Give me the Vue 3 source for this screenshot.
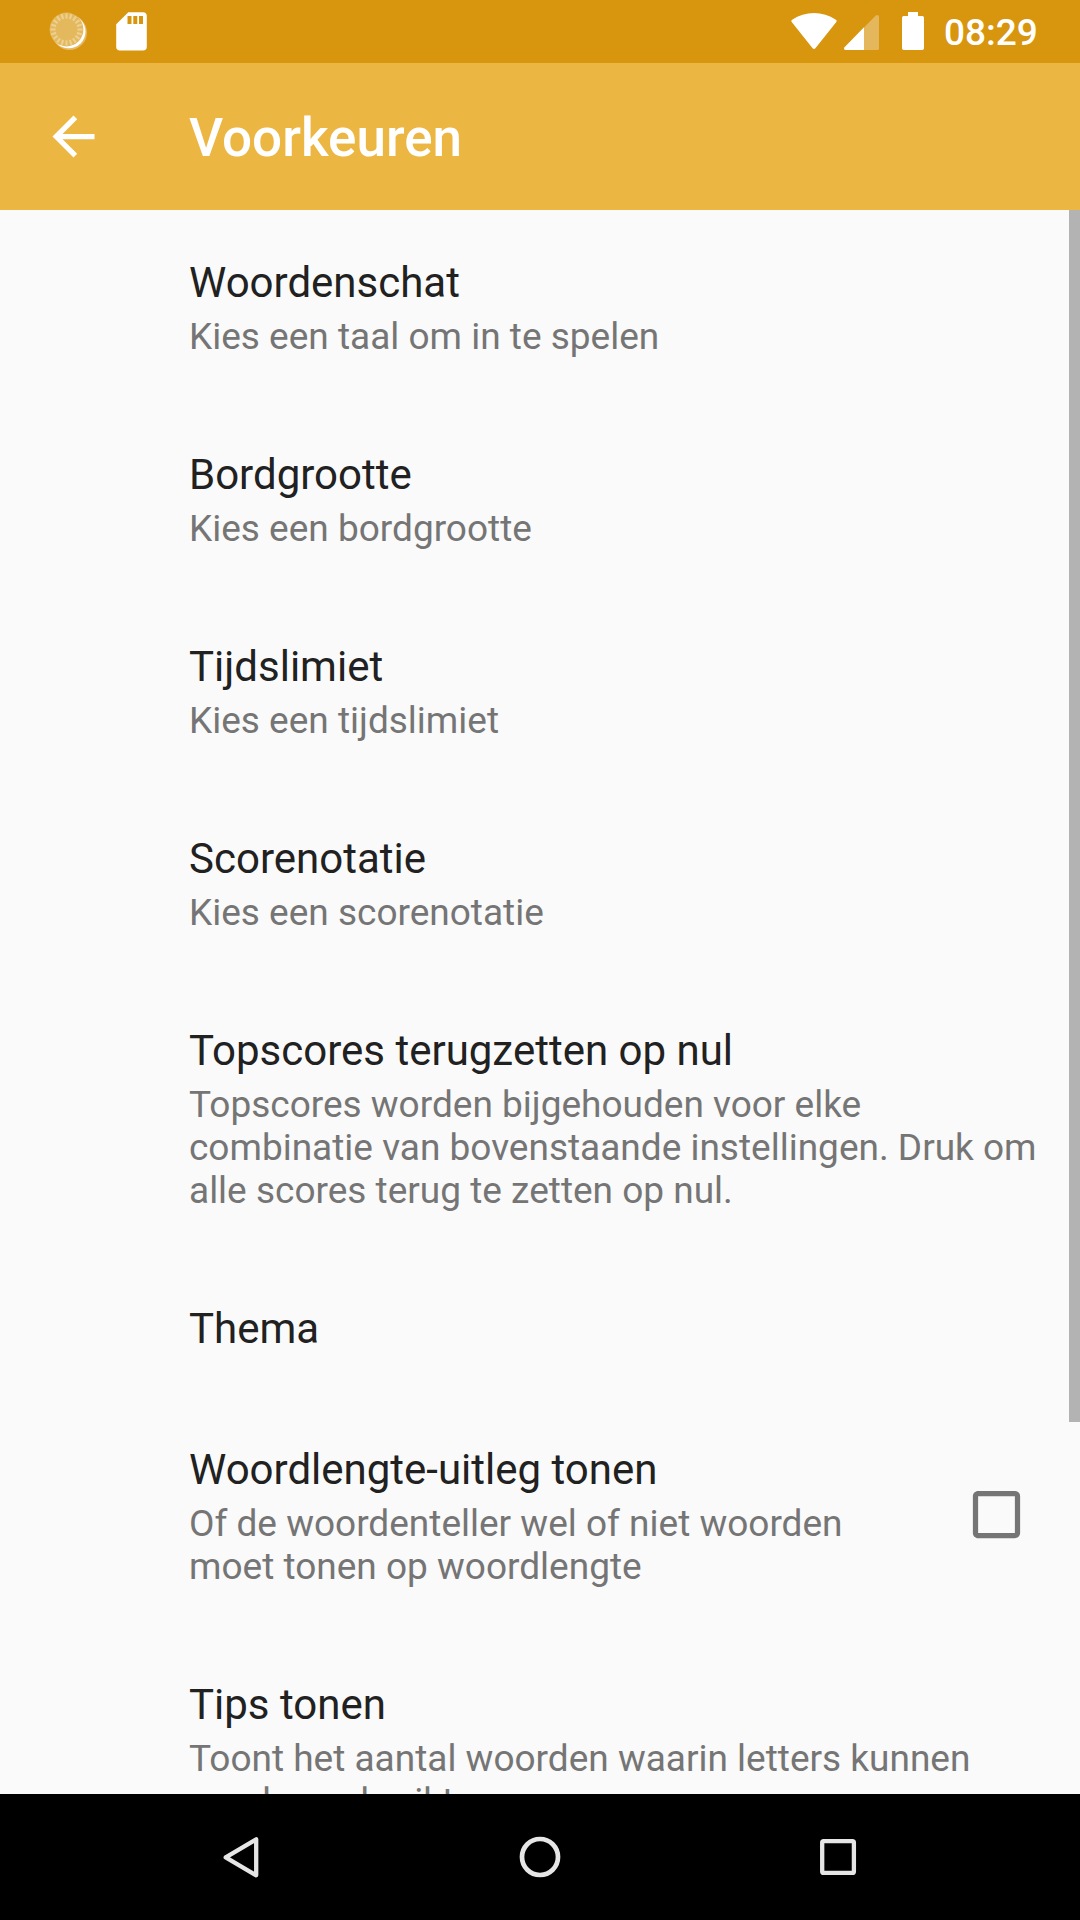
<script setup>
const items = [
  { title: 'Woordenschat', summary: 'Kies een taal om in te spelen' },
  { title: 'Bordgrootte', summary: 'Kies een bordgrootte' },
  { title: 'Tijdslimiet', summary: 'Kies een tijdslimiet' },
  { title: 'Scorenotatie', summary: 'Kies een scorenotatie' },
  {
    title: 'Topscores terugzetten op nul',
    summary:
      'Topscores worden bijgehouden voor elke combinatie van bovenstaande instellingen. Druk om alle scores terug te zetten op nul.',
  },
  { title: 'Thema' },
  {
    title: 'Woordlengte-uitleg tonen',
    summary: 'Of de woordenteller wel of niet woorden moet tonen op woordlengte',
    checkbox: true,
  },
  {
    title: 'Tips tonen',
    summary: 'Toont het aantal woorden waarin letters kunnen worden gebruikt',
  },
]

const rays = Array.from({ length: 20 }, (_, i) => i * 18)
</script>

<template>
  <div class="screen">
    <header class="status">
      <svg class="status-icons" width="160" height="63" viewBox="0 0 160 63">
        <circle cx="69.500" cy="32.500" r="17.500" fill="#fff" fill-opacity=".35" />
        <circle cx="68.700" cy="31.500" r="16.800" fill="#fff" />
        <circle cx="66.500" cy="29.500" r="16.900" fill="#e4b85c" />
        <g stroke="#edcf90" stroke-width="2.200">
          <line
            v-for="a in rays"
            :key="a"
            x1="66.500"
            y1="13.400"
            x2="66.500"
            y2="18.600"
            :transform="`rotate(${a} 66.500 29.500)`"
          />
        </g>
        <path
          fill="#fff"
          fill-rule="evenodd"
          d="M128.300 12.300H143a3.800 3.800 0 0 1 3.800 3.800V46.700a3.800 3.800 0 0 1-3.800 3.800H120a3.800 3.800 0 0 1-3.800-3.800V24.300ZM127.500 16v8h4v-8ZM133.300 16v8h4v-8ZM139 16v8h4v-8Z"
        />
      </svg>
      <div class="status-right">
        <svg width="136" height="63" viewBox="790 0 136 63" fill="#fff">
          <path d="M791.900 22C791.300 21.200 791.500 20.300 792.300 19.800C799 15.200 806.500 13 814.200 13S829.400 15.200 836.100 19.800C836.900 20.300 837.100 21.200 836.500 22L815.600 48.300C814.800 49.300 813.600 49.300 812.800 48.300Z" transform="translate(-.2 0)" />
          <path fill-opacity=".32" d="M864 27.500L875.800 15.600C877 14.400 879 15 879 17V48.500A1.500 1.500 0 0 1 877.500 50H864Z" />
          <path d="M864 27.300V50H845.500C844 50 843.500 48.500 844.500 47.300Z" />
          <path d="M908 12h10v4h4.300a1.700 1.700 0 0 1 1.700 1.700V48.300a1.700 1.700 0 0 1-1.700 1.700H903.700a1.700 1.700 0 0 1-1.700-1.700V17.700a1.700 1.700 0 0 1 1.700-1.700H908Z" />
        </svg>
        <span class="clock">08:29</span>
      </div>
    </header>

    <div class="toolbar">
      <svg class="back" width="63" height="63" viewBox="0 0 24 24">
        <path fill="#fff" d="M20 11H7.830l5.590-5.590L12 4l-8 8 8 8 1.410-1.410L7.830 13H20v-2z" />
      </svg>
      <h1>Voorkeuren</h1>
    </div>

    <main class="list">
      <section v-for="item in items" :key="item.title" class="item">
        <div class="texts">
          <div class="title">{{ item.title }}</div>
          <div v-if="item.summary" class="summary">{{ item.summary }}</div>
        </div>
        <svg v-if="item.checkbox" class="check" width="63" height="63" viewBox="0 0 24 24">
          <path
            fill="#757575"
            d="M19 5v14H5V5h14m0-2H5c-1.100 0-2 .9-2 2v14c0 1.100.9 2 2 2h14c1.100 0 2-.9 2-2V5c0-1.100-.9-2-2-2z"
          />
        </svg>
      </section>
      <div class="scrollbar"></div>
    </main>

    <nav class="nav">
      <svg width="298" height="126" viewBox="93 0 298 126" fill="none" stroke="#e6e6e6" stroke-width="4.300">
        <path stroke-linejoin="round" d="M256.200 45V81L225.700 63Z" transform="translate(0 .3)" />
      </svg>
      <svg width="298" height="126" viewBox="391 0 298 126" fill="none" stroke="#e6e6e6" stroke-width="4.700">
        <circle cx="540" cy="63" r="18" />
      </svg>
      <svg width="298" height="126" viewBox="689 0 298 126" fill="none" stroke="#e6e6e6" stroke-width="4.300">
        <rect x="822.200" y="47.200" width="31.700" height="31.700" rx="1.500" />
      </svg>
    </nav>
  </div>
</template>

<style>
body {
  margin: 0;
}
</style>

<style scoped>
.screen {
  display: flex;
  flex-direction: column;
  width: 1080px;
  height: 1920px;
  overflow: hidden;
  background: #fafafa;
  font-family: Roboto, "Noto Sans", sans-serif;
}
svg {
  display: block;
  flex: none;
}
.status {
  display: flex;
  flex: none;
  justify-content: space-between;
  height: 63px;
  background: #d8960f;
}
.status-right {
  display: flex;
  width: 290px;
}
.clock {
  margin-left: 18px;
  padding-top: 11px;
  font-size: 37px;
  line-height: 43px;
  font-weight: 500;
  color: #fff;
}
.toolbar {
  display: flex;
  flex: none;
  align-items: center;
  height: 147px;
  background: #ecb642;
}
.back {
  margin: 0 84px 0 42px;
}
h1 {
  margin: 3px 0 0;
  font-size: 53px;
  line-height: 62px;
  font-weight: 500;
  color: #fff;
}
.list {
  position: relative;
  flex: 1;
  min-height: 0;
  overflow: hidden;
}
.item {
  display: flex;
  align-items: center;
  justify-content: space-between;
  padding: 48px 42px 44px 189px;
}
.texts {
  flex: 1;
}
.title {
  font-size: 42px;
  line-height: 49px;
  color: #212121;
}
.summary {
  margin-top: 8px;
  margin-right: -6px;
  font-size: 37px;
  line-height: 43px;
  color: #757575;
}
.check {
  margin: -5px 10.5px 0 84px;
}
.scrollbar {
  position: absolute;
  top: 0;
  right: 0;
  width: 11px;
  height: 1212px;
  background: #b3b3b3;
}
.nav {
  display: flex;
  flex: none;
  justify-content: center;
  height: 126px;
  background: #000;
}
</style>
